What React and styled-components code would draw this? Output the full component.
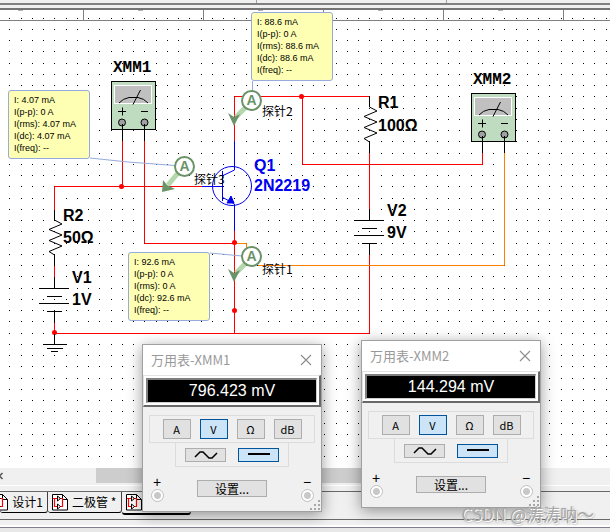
import { useState } from "react";
import styled, { createGlobalStyle } from "styled-components";

const RED = "#ff0000";
const BLUE = "#0000f0";
const ORANGE = "#ff8000";

const notes = [
  { id: 3, x: 8, y: 80, lines: ["I: 4.07 mA", "I(p-p): 0 A", "I(rms): 4.07 mA", "I(dc): 4.07 mA", "I(freq): --"] },
  { id: 2, x: 251, y: 2, lines: ["I: 88.6 mA", "I(p-p): 0 A", "I(rms): 88.6 mA", "I(dc): 88.6 mA", "I(freq): --"] },
  { id: 1, x: 128, y: 242, lines: ["I: 92.6 mA", "I(p-p): 0 A", "I(rms): 0 A", "I(dc): 92.6 mA", "I(freq): --"] },
];

export default function App() {
  return (
    <Page>
      <GlobalStyle />
      <TopBar>
        <Separator $width={257} />
        <Separator $width={190} />
      </TopBar>
      <Frame />
      <Sheet>
        <Schematic />
        {notes.map((note) => (
          <Note key={note.id} $x={note.x} $y={note.y}>
            {note.lines.map((line) => (
              <li key={line}>{line}</li>
            ))}
          </Note>
        ))}
      </Sheet>
      <ScrollBar>
        <ScrollButton type="button" aria-label="Scroll left">
          <svg width="4" height="8" viewBox="0 0 4 8">
            <path d="M2.5 1 L-0.5 4 L2.5 7" fill="none" stroke="#505050" strokeWidth="1.5" />
          </svg>
        </ScrollButton>
        <ScrollThumb />
      </ScrollBar>
      <Tabs>
        <Tab type="button" $width={48} $clipped>
          <SheetIcon />
          设计1
        </Tab>
        <Tab type="button" $width={74}>
          <SheetIcon />
          二极管 *
        </Tab>
        <Tab type="button" $width={69} $active aria-label="当前设计">
          <SheetIcon />
        </Tab>
      </Tabs>
      <StatusBar />
      <Multimeter name="XMM1" value="796.423 mV" x={142} y={344} />
      <Multimeter name="XMM2" value="144.294 mV" x={361} y={340} />
      <Watermark>CSDN @涛涛呐～</Watermark>
    </Page>
  );
}

const Multimeter = ({ name, value, x, y }) => {
  const [unit, setUnit] = useState("V");
  const [signal, setSignal] = useState("dc");

  return (
    <Window $x={x} $y={y}>
      <TitleBar>
        <span>万用表-{name}</span>
        <CloseButton type="button" aria-label="Close">
          <svg width="12" height="12" viewBox="0 0 12 12">
            <path d="M1 1 L11 11 M11 1 L1 11" stroke="#8c8c8c" strokeWidth="1.1" />
          </svg>
        </CloseButton>
      </TitleBar>
      <Display>
        <Reading>{value}</Reading>
      </Display>
      <Units>
        {["A", "V", "Ω", "dB"].map((item) => (
          <Toggle key={item} type="button" $on={unit === item} onClick={() => setUnit(item)}>
            {item}
          </Toggle>
        ))}
      </Units>
      <Signals>
        <SignalToggle type="button" aria-label="AC" $on={signal === "ac"} onClick={() => setSignal("ac")}>
          <svg width="24" height="10" viewBox="0 0 24 10">
            <path d="M1 7 L6 2 H9 L15 8 H18 L23 3" fill="none" stroke="#000" strokeWidth="1.5" />
          </svg>
        </SignalToggle>
        <SignalToggle type="button" aria-label="DC" $on={signal === "dc"} onClick={() => setSignal("dc")}>
          <svg width="22" height="10" viewBox="0 0 22 10">
            <path d="M0 4 H22" stroke="#000" strokeWidth="2" />
          </svg>
        </SignalToggle>
      </Signals>
      <Footer>
        <Terminal>
          +
          <input type="radio" name={`${name}-plus`} />
        </Terminal>
        <SettingsButton type="button">设置...</SettingsButton>
        <Terminal>
          −
          <input type="radio" name={`${name}-minus`} />
        </Terminal>
      </Footer>
      <Grip width="12" height="12" viewBox="0 0 12 12">
        <path d="M9 1h2v2h-2z M5 5h2v2h-2z M9 5h2v2h-2z M1 9h2v2h-2z M5 9h2v2h-2z M9 9h2v2h-2z" fill="#a8a8a8" />
      </Grip>
    </Window>
  );
};

const SheetIcon = () => (
  <svg width="16" height="17" viewBox="0 0 16 17" fill="none">
    <path d="M.5 .5 H10.5 L15.5 5.5 V16 H.5 Z" fill="#fff" stroke="#000" />
    <path d="M10.5 .5 V5.5 H15.5" stroke="#000" />
    <path d="M1 4.5 H5 M2.5 4.5 V12.5 H5 M7.5 4.5 H10.5 V12.5 H8" stroke="#f00" strokeWidth="1.2" />
    <path d="M5.5 2 V7 L8.500 4.500 Z M5.500 10 V15 L8.500 12.500 Z" stroke="#000" />
  </svg>
);

const MeterSymbol = ({ x, y, name }) => (
  <g transform={`translate(${x} ${y})`}>
    <MonoLabel x="2" y="-9">{name}</MonoLabel>
    <rect x=".5" y=".5" width="44" height="48" fill="#c0dcc0" stroke="#000" />
    <rect x="3.5" y="4.5" width="37" height="18" fill="#c0c0c0" stroke="#fff" />
    <path d="M8 22 Q12 17.5 18 16.5 H27 Q33 17.5 37 22 M22 23.5 L29.5 9" fill="none" stroke="#000" />
    <path d="M7 30.5 H15 M11.5 26.5 V34.5 M30 30.5 H37" stroke="#000" />
    <circle cx="11" cy="41.5" r="3.5" fill="#a0a0a4" stroke="#000" />
    <circle cx="33.5" cy="41.5" r="3.5" fill="#a0a0a4" stroke="#000" />
    <path d="M11.5 43 V60 M33.5 43 V60" stroke="#000" />
  </g>
);

const Resistor = ({ x, y }) => (
  <g transform={`translate(${x} ${y})`} fill="none" stroke="#000">
    <path d="M.5 0 V10 L8 14 L-5 19.5 L8 25 L-5 30.5 L8 36 L-5 41.5 L.5 45 V56" />
  </g>
);

const Battery = ({ x, y }) => (
  <g transform={`translate(${x} ${y})`} fill="none" stroke="#000">
    <path d="M.5 -11 V.5 M-15 .5 H15 M-7 8.5 H8 M-15 15.5 H15 M-7 23.5 H8 M.5 23.5 V35" />
  </g>
);

const Probe = ({ x, y, diagonal }) => (
  <g transform={`translate(${x} ${y})`}>
    {diagonal ? (
      <>
        <path d="M-6 7 L-16 19" stroke="#b4d8ac" strokeWidth="5" />
        <path d="M-22 26 L-21 14 L-17 19 L-9 23 Z" fill="#6b9368" />
      </>
    ) : (
      <>
        <path d="M-6 8 L-15 17" stroke="#b4d8ac" strokeWidth="5" />
        <path d="M-17 26 L-23 13 L-17 17 L-11 14 Z" fill="#6b9368" />
      </>
    )}
    <circle cx=".5" cy=".5" r="9.5" fill="#fff" stroke="#6b9368" strokeWidth="2" />
    <ProbeLetter x=".5" y="5">A</ProbeLetter>
  </g>
);

const Schematic = () => (
  <Drawing>
    <defs>
      <pattern id="dots" width="45" height="45" patternUnits="userSpaceOnUse">
        {[8, 19, 30, 41].map((y) =>
          [9, 21, 32, 43].map((x) => <rect key={`${x}-${y}`} x={x} y={y} width="1" height="1" fill="#000" />)
        )}
      </pattern>
      <pattern id="ruler" x="83" width="120" height="11" patternUnits="userSpaceOnUse">
        <path d="M.5 0 V10 M0 10.5 H120" stroke="#808080" />
        <path d="M55 .5 H60" stroke="#b0b0b0" />
      </pattern>
    </defs>
    <rect width="100%" height="100%" fill="url(#dots)" />
    <rect width="100%" height="11" fill="url(#ruler)" />

    {/* everything below uses window coordinates, the sheet starts under the 10px bars */}
    <g transform="translate(0 -10)">
      <g fill="none" stroke={RED}>
        <path d="M122.5 141 V186.5 M144.5 141 V243.5 H234" />
        <path d="M54.5 210 V186.5 H202 M54.5 265 V277 M54.5 321 V333.5 H369.5 V255" />
        <path d="M234.5 141 V96.5 H369 M302.5 96 V164.5 H482.5 V153 M369.5 153 V209" />
        <path d="M234.5 231 V333" />
      </g>
      <path d="M504.5 153 V265.5 H258 M234 243.5 H246.5 V248" fill="none" stroke={ORANGE} />
      <g fill="none" stroke={BLUE}>
        <path d="M202 186.5 H222 M222.5 171 V201 M222 176 L234.5 170 V141 M222 197 L234.5 204 V231" />
        <circle cx="232" cy="186" r="19.5" />
        <path d="M231 196 L227 203 H234 Z" fill={BLUE} />
      </g>
      <g fill={RED}>
        <circle cx="121.5" cy="186.5" r="2.5" />
        <circle cx="301.5" cy="96.5" r="2.5" />
        <circle cx="234.5" cy="242.5" r="2.5" />
        <circle cx="234.5" cy="310.5" r="2.5" />
        <circle cx="54.5" cy="332.5" r="2.5" />
      </g>
      <path d="M54.5 334 V344 M43 344.5 H67 M47 348.5 H63 M51 351.5 H58" stroke="#000" />

      <MeterSymbol x={111} y={81} name="XMM1" />
      <MeterSymbol x={471} y={93} name="XMM2" />
      <Resistor x={54} y={210} />
      <Resistor x={369} y={97} />
      <Battery x={54} y={288} />
      <Battery x={369} y={220} />

      <path d="M90 158 L128 162 L175 165.5 M252.5 81 V91 M210 253 L242 256" fill="none" stroke="#96aadc" />
      <Probe x={251} y={100} />
      <Probe x={184} y={166} diagonal />
      <Probe x={251} y={256} />

      <Label x="63" y="221">R2</Label>
      <Label x="63" y="243">50Ω</Label>
      <Label x="72" y="283">V1</Label>
      <Label x="72" y="305">1V</Label>
      <Label x="378" y="108">R1</Label>
      <Label x="378" y="131">100Ω</Label>
      <Label x="387" y="216">V2</Label>
      <Label x="387" y="238">9V</Label>
      <Label x="254" y="171" $color={BLUE}>Q1</Label>
      <Label x="254" y="191" $color={BLUE}>2N2219</Label>
      <ProbeName x="262" y="116">探针2</ProbeName>
      <ProbeName x="194" y="184">探针3</ProbeName>
      <ProbeName x="262" y="274">探针1</ProbeName>
    </g>
  </Drawing>
);

const GlobalStyle = createGlobalStyle`
  * {
    box-sizing: border-box;
  }

  body {
    margin: 0;
    background: #f0f0f0;
    font-family: "Liberation Sans", "Noto Sans CJK SC", sans-serif;
  }

  button {
    padding: 0;
    border: 0;
    background: none;
    color: #000;
    font-family: "Noto Sans CJK SC", sans-serif;
    font-size: 12px;
  }

  svg {
    flex-shrink: 0;
  }
`;

const Page = styled.main`
  position: relative;
  display: flex;
  flex-direction: column;
  min-height: 100vh;
  overflow: hidden;
`;

const TopBar = styled.header`
  display: flex;
  height: 3px;
  background: #f0f0f0;
`;

const Separator = styled.span`
  width: ${({ $width }) => $width}px;
  border-right: 1px solid #a0a0a0;
`;

const Frame = styled.div`
  height: 7px;
  border-top: 2px solid #808080;
  border-bottom: 2px solid #747474;
  background: #f0f0f0;
`;

const Sheet = styled.section`
  position: relative;
  display: flex;
  flex: 1;
  min-height: 458px;
  background: #fff;
`;

const Drawing = styled.svg`
  flex: 1;
  min-width: 0;
`;

const Label = styled.text`
  fill: ${({ $color }) => $color || "#000"};
  font-size: 16px;
  font-weight: bold;
`;

const MonoLabel = styled.text`
  font-family: "Liberation Mono", monospace;
  font-size: 16px;
  font-weight: bold;
`;

const ProbeName = styled.text`
  font-family: "Noto Sans CJK SC", sans-serif;
  font-size: 12px;
`;

const ProbeLetter = styled.text`
  fill: #6b9368;
  font-size: 14px;
  font-weight: bold;
  text-anchor: middle;
`;

const Note = styled.ul`
  position: absolute;
  left: ${({ $x }) => $x}px;
  top: ${({ $y }) => $y}px;
  width: 82px;
  margin: 0;
  padding: 3px 5px 4px;
  border: 1px solid #96aadc;
  border-radius: 3px;
  background: #ffffb4;
  font-size: 9px;
  line-height: 12px;
  list-style: none;
  white-space: nowrap;
`;

const ScrollBar = styled.div`
  display: flex;
  height: 18px;
  padding-bottom: 2px;
  border-bottom: 1px solid #fff;
`;

const ScrollButton = styled.button`
  display: flex;
  align-items: center;
  width: 96px;
`;

const ScrollThumb = styled.div`
  width: 58%;
  background: #cdcdcd;
`;

const Tabs = styled.nav`
  display: flex;
  height: 28px;
  margin-top: 5px;
  border-top: 1px solid #696969;
`;

const Tab = styled.button`
  display: flex;
  align-items: center;
  justify-content: ${({ $clipped }) => ($clipped ? "flex-end" : "flex-start")};
  gap: 4px;
  width: ${({ $width }) => $width}px;
  height: ${({ $active }) => ($active ? 23 : 21)}px;
  padding: 0 4px;
  border-right: 1px solid #404040;
  border-bottom: ${({ $active }) => ($active ? 2 : 1)}px solid #000;
  border-radius: 0 0 3px 3px;
  line-height: 16px;
  white-space: nowrap;
`;

const StatusBar = styled.footer`
  height: 13px;
  border-top: 1px solid #696969;
  background: linear-gradient(#f0f0f0 5px, #fff 5px 7px, #808090 7px 8px, #e8e8e8 8px);
`;

const Window = styled.section`
  position: absolute;
  left: ${({ $x }) => $x}px;
  top: ${({ $y }) => $y}px;
  display: flex;
  flex-direction: column;
  width: 180px;
  height: 168px;
  border: 1px solid #a0a0a0;
  background: #f0f0f0;
  box-shadow: 0 3px 14px rgba(0, 0, 0, 0.4);
`;

const TitleBar = styled.div`
  display: flex;
  align-items: center;
  justify-content: space-between;
  height: 30px;
  padding: 0 9px 0 8px;
  background: #fff;
  color: #999;
  font-family: "Noto Sans CJK SC", sans-serif;
  font-size: 13px;
  line-height: 20px;
`;

const CloseButton = styled.button`
  display: flex;
  align-items: center;
`;

const Display = styled.div`
  height: 32px;
  padding: 2px;
  border: 1px solid #e3e3e3;
  border-right: 2px solid #696969;
  border-bottom: 2px solid #696969;
  background: #fff;
`;

const Reading = styled.output`
  display: block;
  height: 25px;
  border: 2px solid #808080;
  border-right: 1px solid #d0d0d0;
  border-bottom: 1px solid #d0d0d0;
  background: #000;
  color: #fff;
  font-size: 16px;
  line-height: 22px;
  text-align: center;
`;

const Group = styled.div`
  display: flex;
  align-items: center;
  align-self: center;
  justify-content: center;
  border: 1px solid #dcdcdc;
`;

const Units = styled(Group)`
  gap: 9px;
  width: 166px;
  height: 28px;
  margin-top: 8px;
`;

const Signals = styled(Group)`
  gap: 12px;
  width: 114px;
  height: 25px;
  margin-top: -1px;
`;

const Toggle = styled.button`
  display: flex;
  align-items: center;
  justify-content: center;
  width: 28px;
  height: 20px;
  border: 1px solid ${({ $on }) => ($on ? "#00549c" : "#adadad")};
  background: ${({ $on }) => ($on ? "#cce4f7" : "#e1e1e1")};
  font-size: 11px;
  line-height: 16px;
`;

const SignalToggle = styled(Toggle)`
  width: 41px;
  height: 14px;
`;

const Footer = styled.div`
  display: flex;
  flex: 1;
  justify-content: space-between;
  padding: 8px 7px;
`;

const Terminal = styled.label`
  display: flex;
  flex-direction: column;
  align-items: center;
  width: 14px;
  font-size: 14px;
  line-height: 14px;

  input {
    appearance: none;
    width: 13px;
    height: 13px;
    margin: 0;
    border: 1px solid #c0c0c0;
    border-radius: 50%;
    background: radial-gradient(#c8c8c8 3px, #fff 4px);
  }
`;

const SettingsButton = styled.button`
  width: 70px;
  height: 17px;
  margin-top: 5px;
  border: 1px solid #adadad;
  background: #e1e1e1;
  line-height: 15px;
`;

const Grip = styled.svg`
  position: absolute;
  right: 0;
  bottom: 0;
`;

const Watermark = styled.p`
  position: absolute;
  right: 16px;
  bottom: 6px;
  margin: 0;
  color: #a8a8a8;
  font-family: "Noto Sans CJK SC", sans-serif;
  font-size: 17px;
  line-height: 24px;
  text-shadow: 1px 1px 0 #fff, 1px 1px 2px #707070;
`;
